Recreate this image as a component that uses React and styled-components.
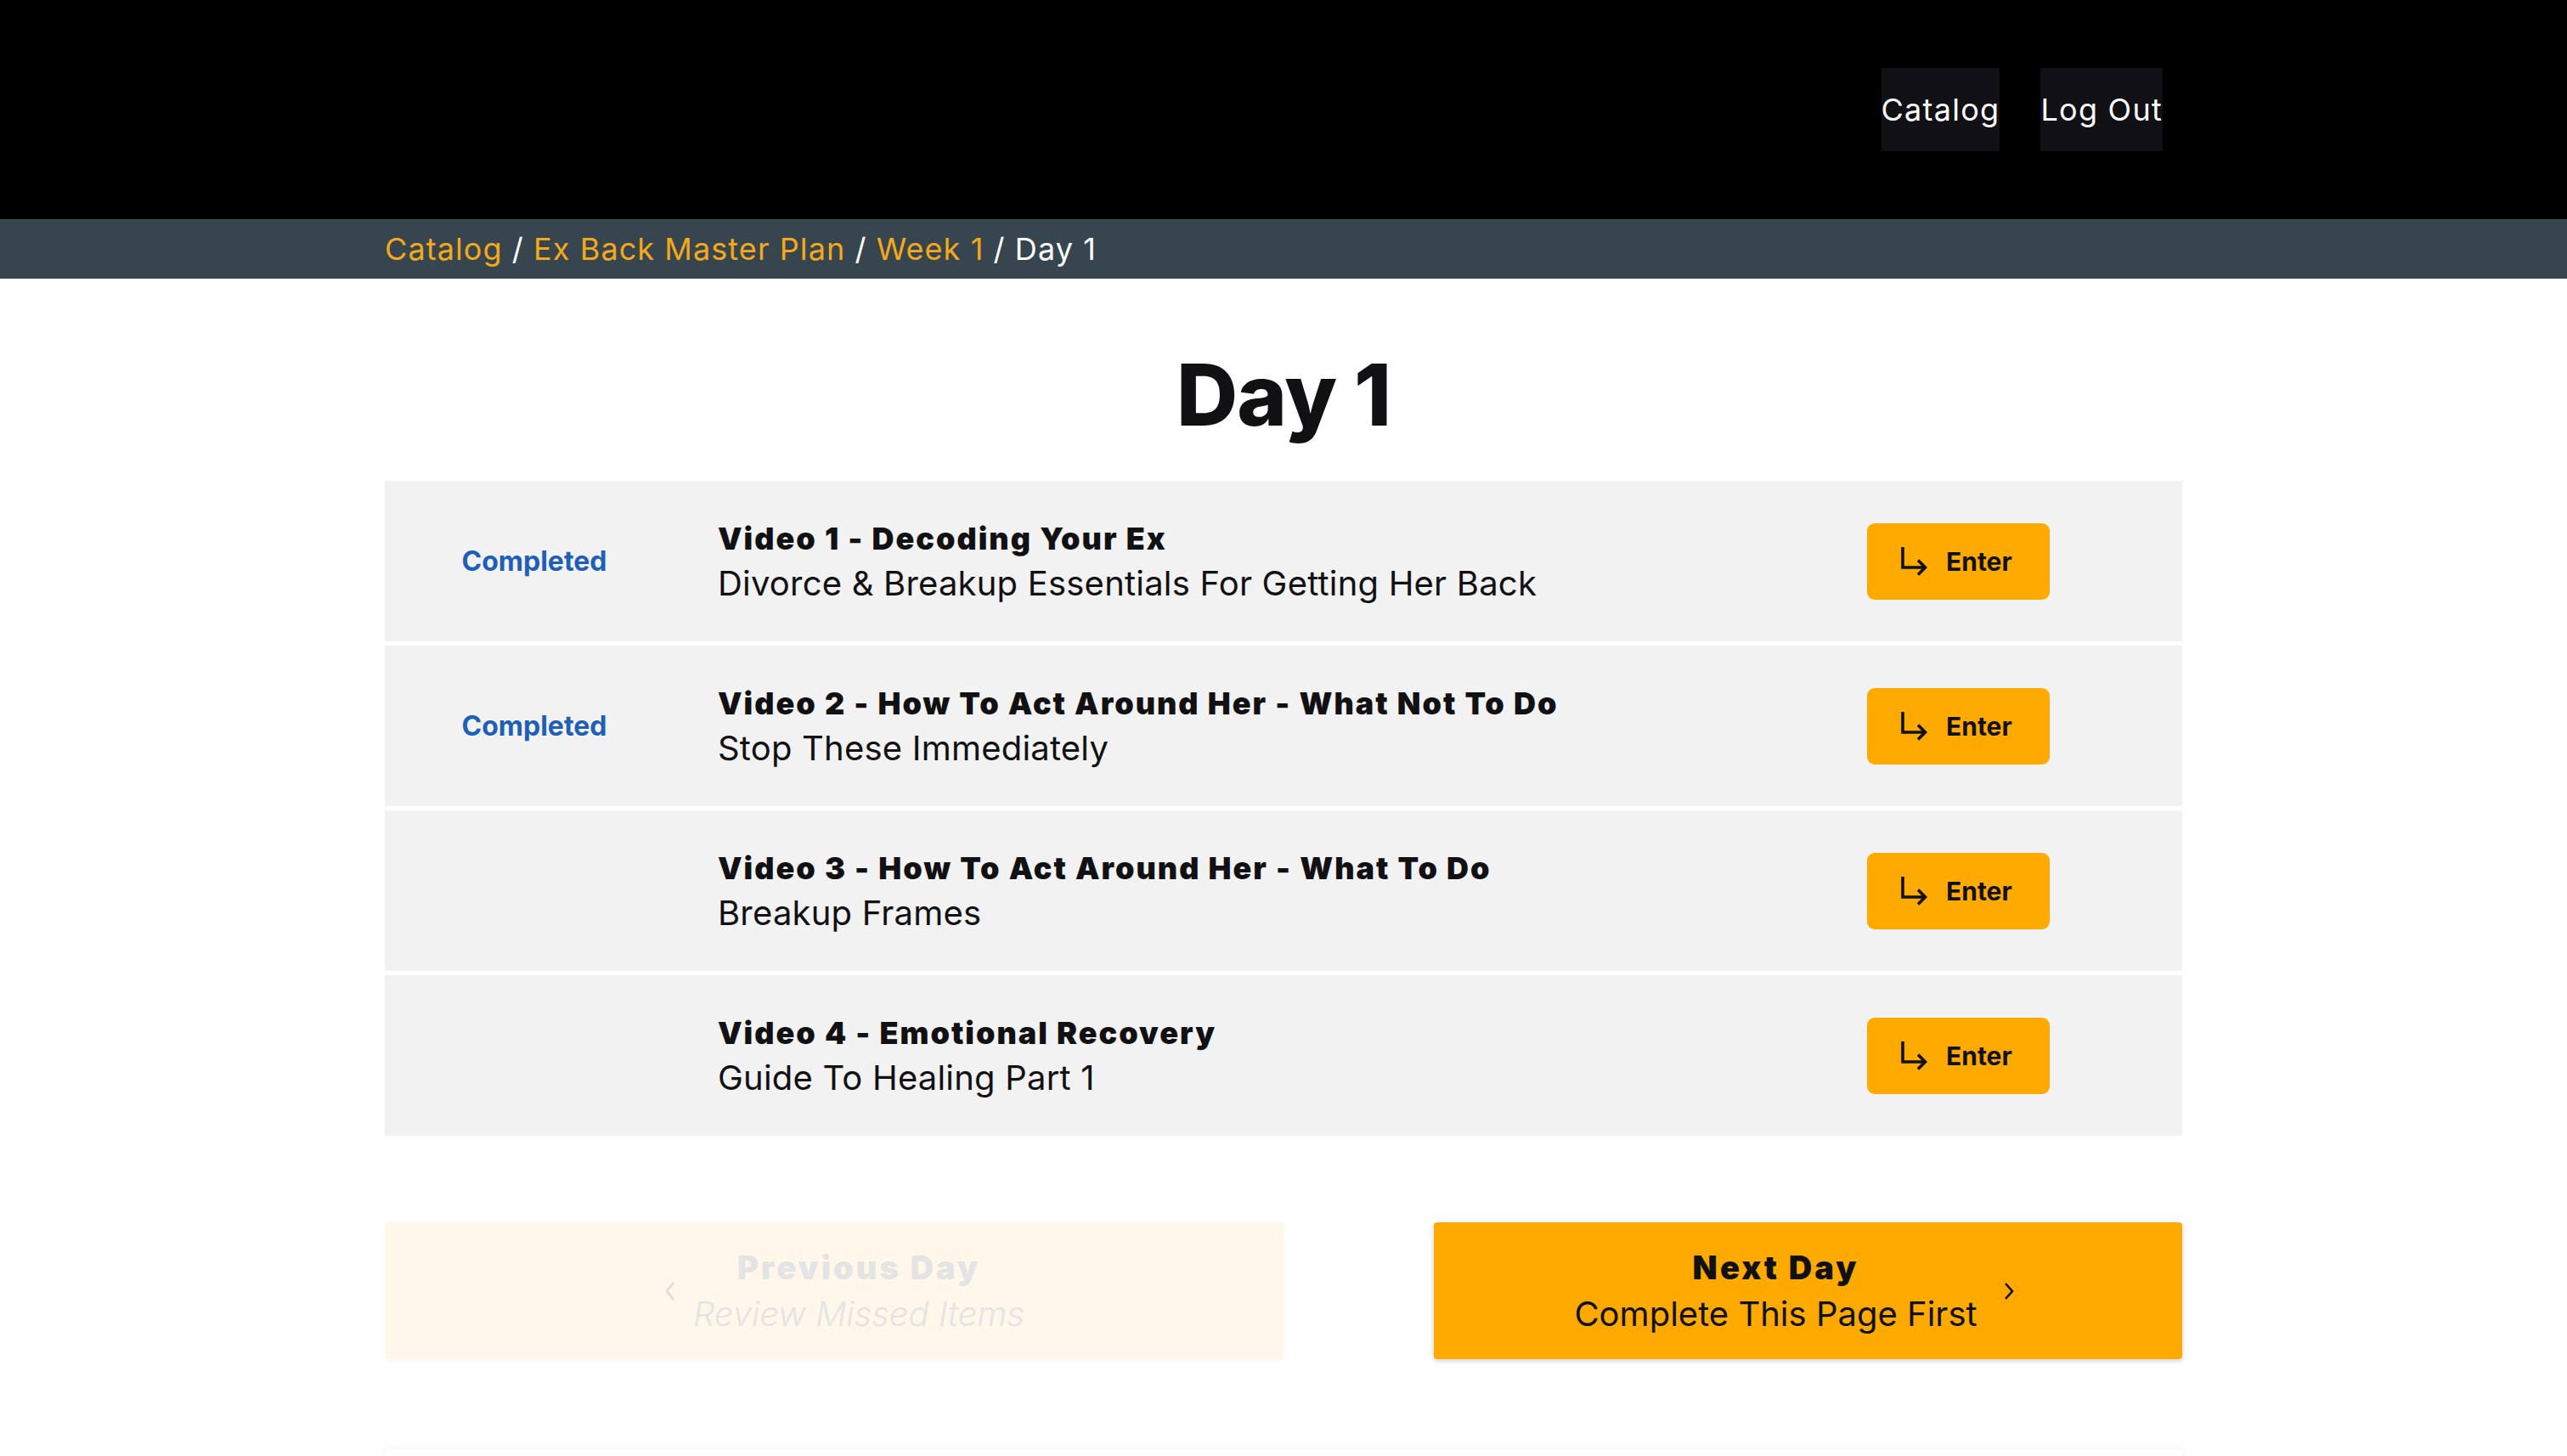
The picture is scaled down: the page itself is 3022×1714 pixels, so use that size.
import React from 'react';
import styled, { createGlobalStyle } from 'styled-components';

const GlobalStyle = createGlobalStyle`
  body {
    margin: 0;
    background: #ffffff;
    font-family: 'Inter', 'Liberation Sans', sans-serif;
    color: #111114;
  }
`;

const Container = styled.div`
  width: 2116px;
  margin: 0 auto;
  box-sizing: border-box;
`;

const Header = styled.header`
  background: #000000;
  height: 258px;
`;

const HeaderInner = styled(Container)`
  height: 100%;
  display: flex;
  justify-content: flex-end;
  align-items: center;
  gap: 48px;
  padding-right: 23px;
`;

const NavButton = styled.a`
  display: flex;
  align-items: center;
  height: 98px;
  background: #111115;
  color: #ffffff;
  font-size: 36px;
  letter-spacing: 0.035em;
  cursor: pointer;
`;

const Crumbs = styled.nav`
  background: #37464e;
  height: 70px;
`;

const CrumbInner = styled(Container)`
  height: 100%;
  display: flex;
  align-items: center;
  font-size: 36px;
  letter-spacing: 0.03em;
  color: #ffffff;
  white-space: pre;
`;

const CrumbLink = styled.a`
  color: #f4a91d;
`;

const Title = styled.h1`
  margin: 77px 0 41px;
  font-size: 100px;
  line-height: 120px;
  font-weight: 800;
  text-align: center;
  letter-spacing: -0.01em;
`;

const List = styled.div`
  display: flex;
  flex-direction: column;
  gap: 5px;
`;

const Row = styled.div`
  height: 189px;
  background: #f2f2f2;
  display: grid;
  grid-template-columns: 352px 1fr auto;
  column-gap: 40px;
  align-items: center;
  padding-right: 156px;
`;

const Status = styled.div`
  text-align: center;
  color: #1f5fb5;
  font-size: 32px;
  font-weight: 700;
`;

const VideoTitle = styled.div`
  font-size: 36px;
  line-height: 44px;
  font-weight: 900;
  letter-spacing: 0.055em;
  margin-top: 2px;
`;

const VideoSub = styled.div`
  font-size: 40px;
  line-height: 50px;
  margin-top: 6px;
  letter-spacing: 0.005em;
`;

const EnterButton = styled.button`
  display: flex;
  align-items: center;
  gap: 22px;
  width: 215px;
  height: 90px;
  box-sizing: border-box;
  padding: 0 0 0 39px;
  border: none;
  border-radius: 9px;
  background: #ffaa00;
  color: #111111;
  font-family: inherit;
  font-size: 30px;
  font-weight: 700;
  cursor: pointer;
`;

const Pager = styled.div`
  display: flex;
  justify-content: space-between;
  margin-top: 102px;
`;

const PageButton = styled.button`
  display: flex;
  align-items: center;
  justify-content: center;
  gap: ${(p) => (p.$next ? '30px' : '20px')};
  width: ${(p) => (p.$next ? '881px' : '1058px')};
  height: 161px;
  padding: ${(p) => (p.$next ? '0 32px 0 0' : '0 0 0 24px')};
  border: none;
  border-radius: 4px;
  font-family: inherit;
  background: ${(p) => (p.$next ? '#ffaa00' : '#fff7e9')};
  color: ${(p) => (p.$next ? '#111111' : '#e4e4e4')};
  box-shadow: ${(p) => (p.$next ? '0 2px 6px rgba(0,0,0,0.18)' : '0 2px 5px rgba(0,0,0,0.03)')};
  cursor: ${(p) => (p.$next ? 'pointer' : 'default')};
`;

const PageText = styled.div`
  display: flex;
  flex-direction: column;
  align-items: center;
`;

const PageTitle = styled.div`
  font-size: 38px;
  line-height: 46px;
  font-weight: 900;
  letter-spacing: 0.08em;
`;

const PageSub = styled.div`
  font-size: 40px;
  line-height: 48px;
  margin-top: 8px;
  font-style: ${(p) => (p.$italic ? 'italic' : 'normal')};
  font-weight: ${(p) => (p.$italic ? 300 : 400)};
`;

const FooterCard = styled.div`
  margin-top: 106px;
  height: 220px;
  background: #ffffff;
  box-shadow: 0 0 10px rgba(0, 0, 0, 0.06);
`;

function EnterIcon() {
  return (
    <svg width="32" height="36" viewBox="0 0 32 36" fill="none" stroke="#111111" strokeWidth="3.6">
      <path d="M3 1 V25 H29" strokeLinejoin="miter" />
      <path d="M21 16.5 L29.5 25 L21 33.5" strokeLinejoin="miter" />
    </svg>
  );
}

function Chevron({ left, color }) {
  return (
    <svg width="14" height="24" viewBox="0 0 14 24" fill="none" stroke={color} strokeWidth="2.6">
      {left ? <path d="M11 2 L3 12 L11 22" /> : <path d="M3 3 L11 12 L3 21" />}
    </svg>
  );
}

const videos = [
  { n: 1, title: 'Decoding Your Ex', sub: 'Divorce & Breakup Essentials For Getting Her Back', done: true },
  { n: 2, title: 'How To Act Around Her - What Not To Do', sub: 'Stop These Immediately', done: true },
  { n: 3, title: 'How To Act Around Her - What To Do', sub: 'Breakup Frames', done: false },
  { n: 4, title: 'Emotional Recovery', sub: 'Guide To Healing Part 1', done: false },
];

export default function App() {
  return (
    <>
      <GlobalStyle />
      <Header>
        <HeaderInner>
          <NavButton>Catalog</NavButton>
          <NavButton>Log Out</NavButton>
        </HeaderInner>
      </Header>
      <Crumbs>
        <CrumbInner>
          <CrumbLink>Catalog</CrumbLink>
          {' / '}
          <CrumbLink>Ex Back Master Plan</CrumbLink>
          {' / '}
          <CrumbLink>Week 1</CrumbLink>
          {' / Day 1'}
        </CrumbInner>
      </Crumbs>
      <Container>
        <Title>Day 1</Title>
        <List>
          {videos.map((v) => (
            <Row key={v.n}>
              <Status>{v.done ? 'Completed' : ''}</Status>
              <div>
                <VideoTitle>{`Video ${v.n} - ${v.title}`}</VideoTitle>
                <VideoSub>{v.sub}</VideoSub>
              </div>
              <EnterButton>
                <EnterIcon />
                Enter
              </EnterButton>
            </Row>
          ))}
        </List>
        <Pager>
          <PageButton disabled>
            <Chevron left color="#dcdcdc" />
            <PageText>
              <PageTitle>Previous Day</PageTitle>
              <PageSub $italic>Review Missed Items</PageSub>
            </PageText>
          </PageButton>
          <PageButton $next>
            <PageText>
              <PageTitle>Next Day</PageTitle>
              <PageSub>Complete This Page First</PageSub>
            </PageText>
            <Chevron color="#111111" />
          </PageButton>
        </Pager>
        <FooterCard />
      </Container>
    </>
  );
}
